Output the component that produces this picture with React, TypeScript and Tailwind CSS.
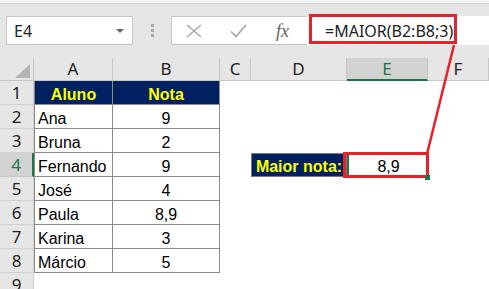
// Planilha Excel — barra de fórmulas + tabela de notas com destaque em MAIOR
const cols = ['A', 'B', 'C', 'D', 'E', 'F'];

const rows: { n: number; aluno?: string; nota?: string }[] = [
  { n: 2, aluno: 'Ana', nota: '9' },
  { n: 3, aluno: 'Bruna', nota: '2' },
  { n: 4, aluno: 'Fernando', nota: '9' },
  { n: 5, aluno: 'José', nota: '4' },
  { n: 6, aluno: 'Paula', nota: '8,9' },
  { n: 7, aluno: 'Karina', nota: '3' },
  { n: 8, aluno: 'Márcio', nota: '5' },
];

function RowHead({ n, active }: { n: number; active?: boolean }) {
  return (
    <div
      className={`h-[24px] border-b border-r flex items-center justify-center text-[17px] font-['Noto_Sans'] ${
        active
          ? 'bg-[#d2d2d2] border-r-[#217346] border-r-2 border-b-[#c6c6c6] text-[#217346]'
          : 'bg-[#e6e6e6] border-[#d0d0d0] text-[#222]'
      }`}
    >
      {n}
    </div>
  );
}

export default function App() {
  return (
    <div className="relative w-[489px] h-[289px] overflow-hidden bg-white font-['Liberation_Sans',sans-serif]">
      {/* Ribbon edge + formula bar */}
      <div className="h-[4px] bg-[#f3f3f3] border-b border-[#d4d4d4]" />
      <div className="h-[54px] bg-[#e6e6e6] pt-[12px]">
        <div className="flex items-stretch h-[29px]">
          <div className="ml-[6px] w-[127px] bg-white border border-[#c6c6c6] flex items-center justify-between pl-[7px] pr-[8px]">
            <span className="font-['Noto_Sans'] text-[16px] text-[#222]">E4</span>
            <span className="w-0 h-0 border-l-[4px] border-r-[4px] border-t-[4px] border-l-transparent border-r-transparent border-t-[#666]" />
          </div>
          <div className="w-[38px] flex flex-col items-center justify-center gap-[2px]">
            <span className="w-[3px] h-[3px] bg-[#a8a8a8]" />
            <span className="w-[3px] h-[3px] bg-[#a8a8a8]" />
            <span className="w-[3px] h-[3px] bg-[#a8a8a8]" />
          </div>
          <div className="w-[136px] bg-white border border-[#c6c6c6] border-r-0 flex items-center">
            <svg width="16" height="14" viewBox="0 0 16 14" className="ml-[14px]">
              <path d="M1 1 L15 13 M15 1 L1 13" stroke="#a6a6a6" strokeWidth="1.4" fill="none" />
            </svg>
            <svg width="17" height="14" viewBox="0 0 17 14" className="ml-[28px]">
              <path d="M1 7.5 L6 12.5 L16 1" stroke="#a6a6a6" strokeWidth="1.6" fill="none" />
            </svg>
            <span className="ml-[29px] font-['Liberation_Serif'] italic text-[18px] text-[#5f5f5f] leading-none">
              fx
            </span>
          </div>
          <div className="flex-1 bg-white relative flex items-center">
            <div className="absolute left-[2px] top-[-2px] w-[148px] h-[30px] border-[3px] border-[#e8202a]" />
            <span className="ml-[18px] font-['Noto_Sans'] text-[16px] text-[#222]">=MAIOR(B2:B8;3)</span>
          </div>
        </div>
      </div>

      {/* Grid */}
      <div className="grid grid-cols-[34px_79px_107px_31px_96px_81px_61px] grid-rows-[23px_repeat(9,24px)]">
        {/* column headers */}
        <div className="bg-[#e6e6e6] border-b border-r border-[#c6c6c6] relative">
          <svg width="16" height="14" viewBox="0 0 16 14" className="absolute left-[15px] top-[6px]">
            <path d="M15 0 L15 14 L0 14 Z" fill="#b4b4b4" />
          </svg>
        </div>
        {cols.map((c) => (
          <div
            key={c}
            className={`flex items-center justify-center text-[17px] font-['Noto_Sans'] border-r ${
              c === 'E'
                ? 'bg-[#d2d2d2] border-b-2 border-b-[#217346] border-r-[#c6c6c6] text-[#217346]'
                : 'bg-[#e6e6e6] border-b border-[#c6c6c6] text-[#222]'
            }`}
          >
            {c}
          </div>
        ))}

        {/* row 1 */}
        <RowHead n={1} />
        <div className="bg-[#002060] border-l border-b border-r border-[#8a8a8a] text-center text-[16px] font-bold text-[#ffff00] leading-[27px] overflow-hidden">
          Aluno
        </div>
        <div className="bg-[#002060] border-b border-r border-[#8a8a8a] text-center text-[16px] font-bold text-[#ffff00] leading-[27px] overflow-hidden">
          Nota
        </div>
        <div />
        <div />
        <div />
        <div />

        {rows.map((r) => (
          <div key={r.n} className="contents">
            <RowHead n={r.n} active={r.n === 4} />
            <div className="border-l border-b border-r border-[#8a8a8a] pl-[3px] text-[16px] text-black leading-[27px] overflow-hidden">
              {r.aluno}
            </div>
            <div className="border-b border-r border-[#8a8a8a] text-center text-[16px] text-black leading-[27px] overflow-hidden">
              {r.nota}
            </div>
            <div />
            {r.n === 4 ? (
              <>
                <div className="bg-[#002060] border border-[#7a7a7a] text-center text-[16px] font-bold text-[#ffff00] leading-[25px] overflow-hidden">
                  Maior nota:
                </div>
                <div className="relative text-center text-[16px] text-black leading-[27px] border-l-2 border-[#217346]">
                  8,9
                  <div className="absolute left-[-6px] top-[-1px] w-[86px] h-[26px] border-[3px] border-[#e8202a]" />
                  <div className="absolute right-[-2px] bottom-[-3px] w-[5px] h-[5px] bg-[#217346]" />
                </div>
              </>
            ) : (
              <>
                <div />
                <div />
              </>
            )}
            <div />
          </div>
        ))}

        {/* row 9 */}
        <RowHead n={9} />
        <div />
        <div />
        <div />
        <div />
        <div />
        <div />
      </div>

      {/* callout line */}
      <svg className="absolute inset-0 pointer-events-none" width="489" height="289">
        <line x1="454" y1="45" x2="427" y2="154" stroke="#e8202a" strokeWidth="2.5" />
      </svg>
    </div>
  );
}
